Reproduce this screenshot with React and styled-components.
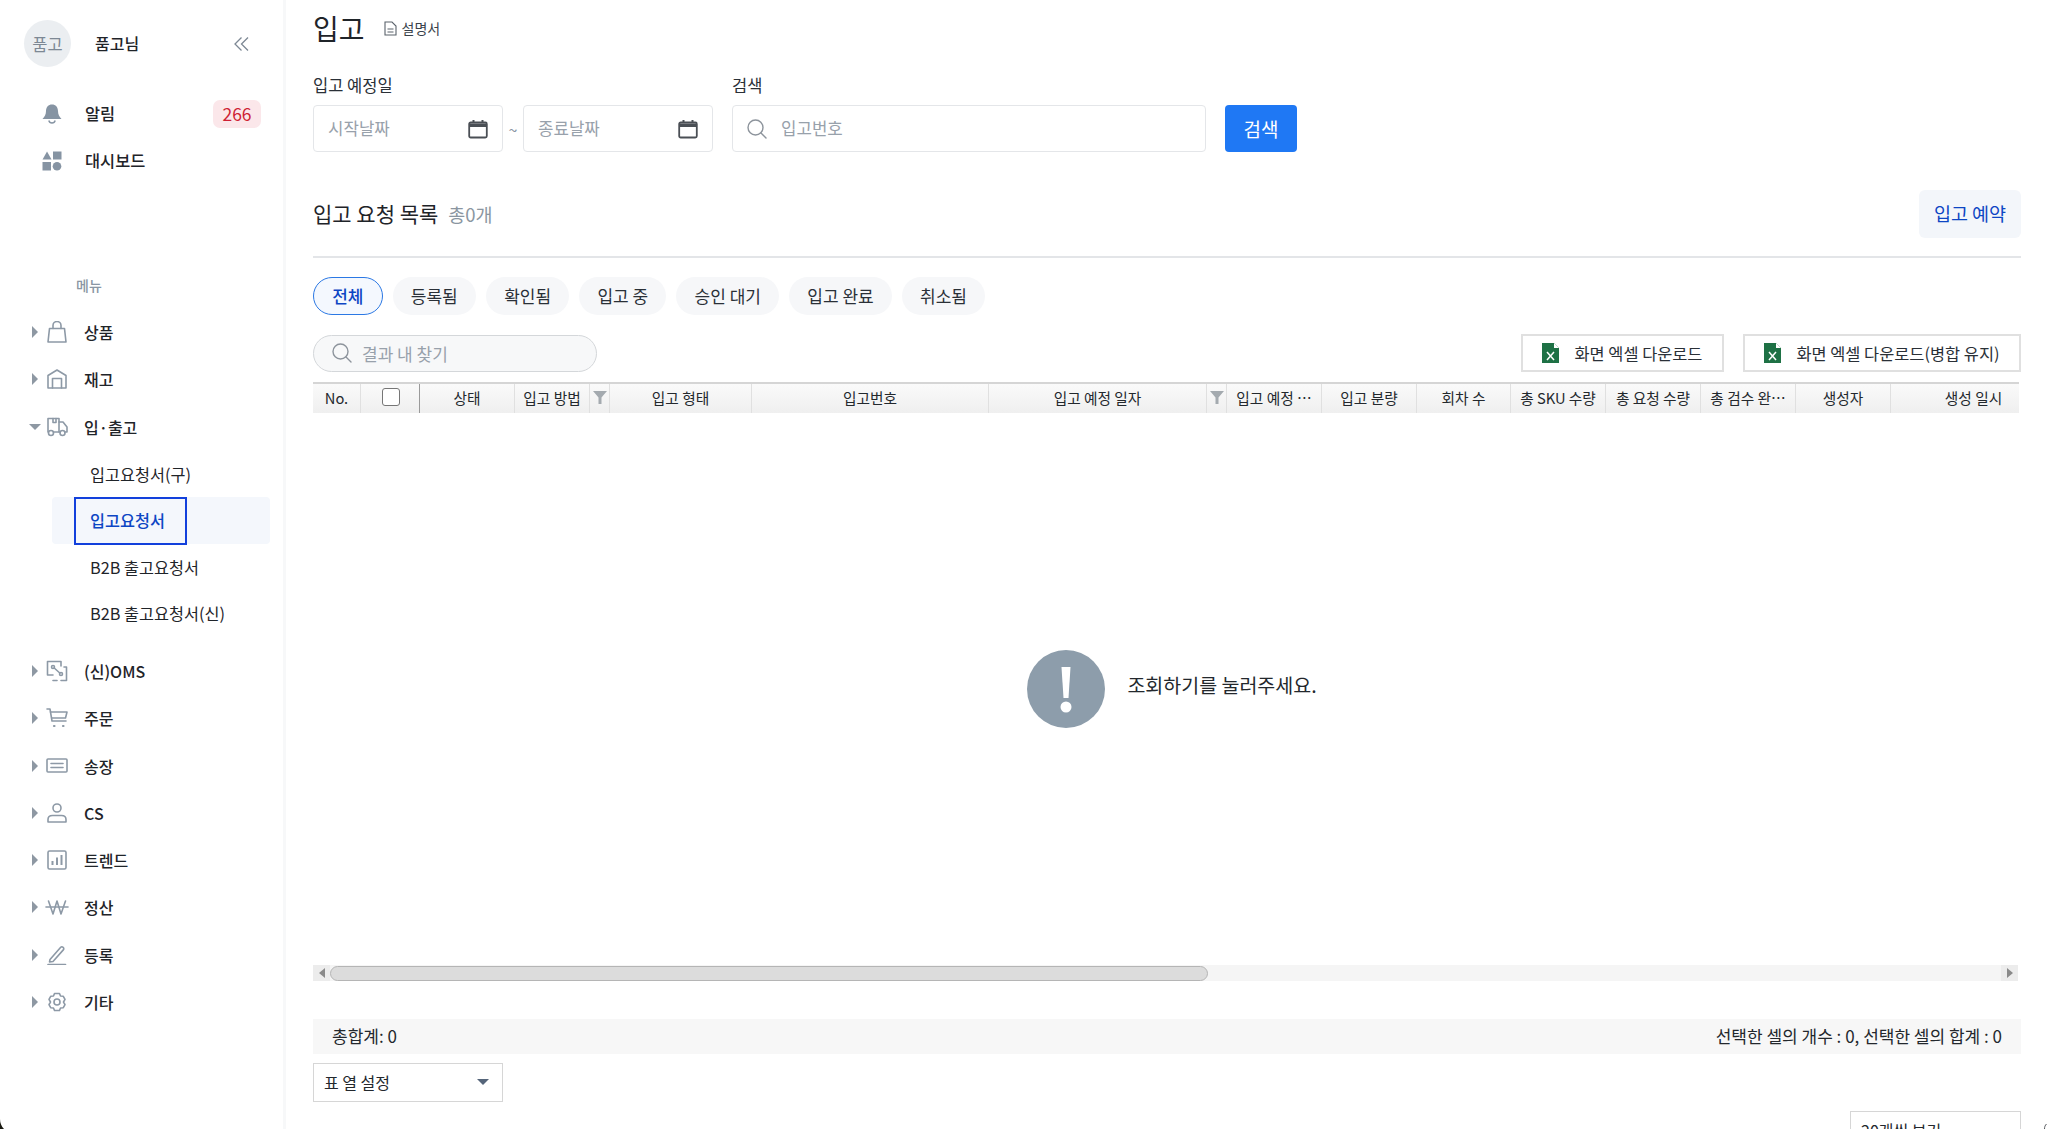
import React from "react";
import styled, { createGlobalStyle } from "styled-components";

const GlobalStyle = createGlobalStyle`
  html, body {
    margin: 0;
    padding: 0;
    height: 1129px;
    overflow: hidden;
    background: #fff;
  }
  * {
    box-sizing: border-box;
  }
  body {
    font-family: "Noto Sans CJK KR", "Noto Sans", sans-serif;
    color: #1f2429;
  }
`;

const Page = styled.div`
  position: relative;
  display: flex;
  width: 2048px;
  height: 1129px;
  overflow: hidden;
`;

const CornerLeft = styled.svg`
  position: absolute;
  left: 0;
  bottom: 0;
`;

const CornerRight = styled.svg`
  position: absolute;
  right: 1px;
  bottom: 0;
`;

//사이드바
const Sidebar = styled.aside`
  flex: none;
  width: 286px;
  height: 100%;
  padding: 20px 12px 0 0;
  border-right: 3px solid #f7f8f9;
`;

const Profile = styled.div`
  display: flex;
  align-items: center;
  height: 47px;
  padding-left: 24px;
`;

const Avatar = styled.div`
  display: flex;
  align-items: center;
  justify-content: center;
  width: 47px;
  height: 47px;
  border-radius: 50%;
  background: #ebeef1;
  color: #7d8894;
  font-size: 16.5px;
`;

const ProfileName = styled.div`
  margin-left: 24px;
  padding-bottom: 2px;
  font-size: 16px;
  font-weight: 500;
`;

const Collapse = styled.div`
  display: flex;
  margin-left: auto;
  margin-right: 22px;
`;

const TopRow = styled.div`
  display: flex;
  align-items: center;
  height: 47px;
  padding-left: 42px;
  font-size: 16.4px;
  font-weight: 500;
`;

const TopLabel = styled.span`
  margin-left: 23px;
  padding-bottom: 2px;
`;

const Badge = styled.span`
  margin-left: auto;
  margin-right: 10px;
  width: 48px;
  height: 28px;
  line-height: 28px;
  border-radius: 7px;
  background: #fbe7ea;
  color: #cf1f35;
  font-size: 17.5px;
  font-weight: 400;
  text-align: center;
`;

const TopNav = styled.nav`
  margin-top: 23px;
`;

const MenuTitle = styled.div`
  margin: 91px 0 0 76px;
  height: 20px;
  line-height: 20px;
  color: #8a96a3;
  font-size: 14px;
  font-weight: 500;
`;

const MenuList = styled.div`
  margin-top: 13.5px;
`;

const MenuRow = styled.div`
  display: flex;
  align-items: center;
  height: 47.3px;
  padding-left: 32px;
  font-size: 16px;
  font-weight: 500;
`;

const Caret = styled.span`
  flex: none;
  width: 0;
  height: 0;
  ${(p) =>
    p.$open
      ? `
    margin-left: -3px;
    border-left: 6px solid transparent;
    border-right: 6px solid transparent;
    border-top: 6px solid #8e98a3;
    margin-right: -3px;
  `
      : `
    border-top: 6px solid transparent;
    border-bottom: 6px solid transparent;
    border-left: 6px solid #8e98a3;
  `}
`;

const MenuIcon = styled.span`
  display: flex;
  flex: none;
  width: 26px;
  margin-left: 5.5px;
  justify-content: center;
`;

const MenuLabel = styled.span`
  margin-left: 14.5px;
`;

const SubList = styled.div`
  margin-bottom: 10.5px;
`;

const SubRow = styled.div`
  position: relative;
  display: flex;
  align-items: center;
  height: 46.6px;
  margin-left: 52px;
  margin-right: 1px;
  padding-left: 38px;
  border-radius: 4px;
  font-size: 16.3px;
  background: ${(p) => (p.$active ? "#f4f7fc" : "transparent")};
  color: ${(p) => (p.$active ? "#0d46c4" : "#1f2429")};
  font-weight: ${(p) => (p.$active ? 500 : 400)};
`;

const FocusRing = styled.span`
  position: absolute;
  left: 22px;
  top: 0;
  width: 113px;
  height: 48px;
  border: 2px solid #1240dc;
`;

//본문
const Main = styled.main`
  flex: 1;
  min-width: 0;
  padding: 0 27px 0 27px;
`;

const TitleRow = styled.div`
  display: flex;
  align-items: center;
  height: 56px;
`;

const Title = styled.h1`
  margin: 0;
  font-size: 28px;
  font-weight: 400;
  line-height: 56px;
`;

const DocLink = styled.span`
  display: flex;
  align-items: center;
  gap: 5px;
  margin-left: 19px;
  font-size: 14px;
  color: #39414a;
`;

const FilterRow = styled.div`
  display: flex;
  align-items: flex-end;
  gap: 19px;
  margin-top: 16px;
`;

const Field = styled.div`
  display: flex;
  flex-direction: column;
  gap: 7px;
`;

const FieldLabel = styled.label`
  font-size: 16.5px;
  line-height: 26px;
  color: #2a3037;
`;

const DateRange = styled.div`
  display: flex;
  align-items: center;
`;

const Tilde = styled.span`
  width: 20px;
  text-align: center;
  color: #8a96a3;
  font-size: 16px;
`;

const InputBox = styled.div`
  display: flex;
  align-items: center;
  width: ${(p) => p.$width}px;
  height: 47px;
  padding: 0 14px;
  border: 1.5px solid #e4e6e9;
  border-radius: 4px;
  background: #fff;
`;

const Placeholder = styled.span`
  flex: 1;
  padding-bottom: 2px;
  font-size: 16.8px;
  color: #98a1ab;
`;

const SearchIcon = styled.span`
  display: flex;
  margin-right: ${(p) => p.$gap}px;
`;

const SearchButton = styled.button`
  width: 72px;
  height: 47px;
  border: 0;
  border-radius: 4px;
  background: #1f78f4;
  color: #fff;
  font-family: inherit;
  font-size: 19px;
`;

const SectionHead = styled.div`
  display: flex;
  align-items: center;
  justify-content: space-between;
  height: 67px;
  margin-top: 39px;
  border-bottom: 2px solid #e3e5e8;
  padding-bottom: 19px;
`;

const SectionTitle = styled.div`
  display: flex;
  align-items: baseline;
  gap: 10px;
  padding-bottom: 2px;
  font-size: 21px;
  font-weight: 400;
`;

const SectionCount = styled.span`
  font-size: 18.5px;
  color: #8b96a1;
`;

const ReserveButton = styled.button`
  width: 102px;
  height: 48px;
  padding: 0 0 2px;
  border: 0;
  border-radius: 6px;
  background: #f3f6fa;
  color: #0d46c4;
  font-family: inherit;
  font-size: 18.5px;
`;

const Chips = styled.div`
  display: flex;
  gap: 10px;
  margin-top: 19px;
`;

const Chip = styled.div`
  display: flex;
  align-items: center;
  justify-content: center;
  height: 38px;
  padding: 0 18.2px 2px;
  border-radius: 19px;
  font-size: 17px;
  background: ${(p) => (p.$active ? "#f4f8fe" : "#f6f7f9")};
  border: ${(p) => (p.$active ? "1.5px solid #2b78e4" : "0")};
  color: ${(p) => (p.$active ? "#0d46c4" : "#2a3037")};
  font-weight: ${(p) => (p.$active ? 500 : 400)};
`;

const ToolRow = styled.div`
  display: flex;
  align-items: center;
  justify-content: space-between;
  margin-top: 19px;
`;

const ResultSearch = styled.div`
  display: flex;
  align-items: center;
  width: 284px;
  height: 37px;
  padding: 0 0 0 18px;
  border: 1.5px solid #d4d7da;
  border-radius: 19px;
  background: #f7f8f9;
  font-size: 17px;
  color: #98a1ab;
`;

const ExcelGroup = styled.div`
  display: flex;
  gap: 19px;
`;

const ExcelButton = styled.div`
  display: flex;
  align-items: center;
  gap: 15px;
  height: 38px;
  padding: 0 19.5px;
  border: 2px solid #e0e0e0;
  background: #fff;
  font-size: 16.4px;
  color: #2a3037;
`;

const TableHead = styled.div`
  display: flex;
  width: 1706px;
  height: 31px;
  margin-top: 10px;
  overflow: hidden;
  border-top: 2px solid #d5d5d5;
  background: linear-gradient(#fafafa, #efefef);
`;

const HeadCell = styled.div`
  display: flex;
  align-items: center;
  justify-content: center;
  flex: none;
  width: ${(p) => p.$w}px;
  padding-bottom: 3px;
  border-right: 1px solid ${(p) => (p.$dark ? "#9a9a9a" : "#e0e0e0")};
  font-size: 14.7px;
  color: #23282d;
  white-space: nowrap;
`;

const CheckBox = styled.span`
  width: 18px;
  height: 18px;
  margin-left: 2px;
  border: 1.5px solid #767676;
  border-radius: 3px;
  background: #fff;
`;

const EmptyArea = styled.div`
  display: flex;
  align-items: center;
  justify-content: center;
  gap: 22px;
  height: 552px;
  padding-left: 10px;
`;

const EmptyBadge = styled.span`
  display: flex;
  width: 78px;
  height: 78px;
`;

const EmptyText = styled.span`
  font-size: 19.5px;
  color: #23282d;
  margin-top: -10px;
`;

const ScrollBar = styled.div`
  display: flex;
  align-items: center;
  width: 1705px;
  height: 16px;
  background: #f5f5f5;
`;

const ScrollArrow = styled.span`
  display: flex;
  align-items: center;
  justify-content: center;
  flex: none;
  width: 17px;
  height: 16px;
  background: #ececec;
  margin-left: ${(p) => (p.$end ? "auto" : 0)};
  &::before {
    content: "";
    border-top: 5px solid transparent;
    border-bottom: 5px solid transparent;
    ${(p) =>
      p.$end
        ? "border-left: 6px solid #8a8a8a;"
        : "border-right: 6px solid #8a8a8a;"}
  }
`;

const ScrollThumb = styled.span`
  width: 878px;
  height: 15px;
  border: 1px solid #b5b5b5;
  border-radius: 8px;
  background: #dcdcdc;
`;

const SumBar = styled.div`
  display: flex;
  align-items: center;
  justify-content: space-between;
  height: 35px;
  margin-top: 38px;
  padding: 0 19px 2px;
  background: #f7f7f7;
  font-size: 17px;
  color: #23282d;
`;

const BottomRow = styled.div`
  display: flex;
  align-items: flex-start;
  justify-content: space-between;
  margin-top: 9px;
`;

const SelectBox = styled.div`
  display: flex;
  align-items: center;
  justify-content: space-between;
  width: ${(p) => p.$width}px;
  height: 39px;
  padding: 0 13px 2px 10px;
  margin-top: ${(p) => p.$top || 0}px;
  border: 1.5px solid #d6d6d6;
  background: #fff;
  font-size: 16px;
  color: #23282d;
`;

const SelectCaret = styled.span`
  width: 0;
  height: 0;
  border-left: 6px solid transparent;
  border-right: 6px solid transparent;
  border-top: 6px solid #55657a;
`;

const iconProps = {
  fill: "none",
  stroke: "#8d99a6",
  strokeWidth: 1.6,
  strokeLinecap: "round",
  strokeLinejoin: "round",
};

const BagIcon = () => (
  <svg width="20" height="22" viewBox="0 0 20 22" {...iconProps}>
    <path d="M2.500 7.500h15L19 21H1z" />
    <path d="M6 7.500V4.500a4 4 0 0 1 8 0v3" />
  </svg>
);

const StockIcon = () => (
  <svg width="20" height="20" viewBox="0 0 20 20" {...iconProps}>
    <path d="M1 19V6.500L10 1l9 5.500V19z" />
    <path d="M5.500 19V9.500h9V19" />
  </svg>
);

const TruckIcon = () => (
  <svg width="22" height="20" viewBox="0 0 22 20" {...iconProps}>
    <path d="M2 15V1.500h11V15" />
    <path d="M13 5h4l4 5v5h-2" />
    <path d="M7 1.500v4h3v-4" />
    <circle cx="5" cy="16" r="2.500" />
    <circle cx="16.500" cy="16" r="2.500" />
    <path d="M7.500 15h6.500" />
  </svg>
);

const OmsIcon = () => (
  <svg width="22" height="22" viewBox="0 0 22 22" {...iconProps}>
    <path d="M7 15H1.500V1.500H15V6" />
    <path d="M15 20.500h5.500V7H18" />
    <path d="M7 20.500h4" />
    <circle cx="7" cy="7" r="1.500" />
    <circle cx="15" cy="14" r="1.500" />
    <path d="M8.200 8l5.600 5" />
  </svg>
);

const CartIcon = () => (
  <svg width="22" height="20" viewBox="0 0 22 20" {...iconProps}>
    <path d="M1 1h3l2 12h14" />
    <path d="M4.500 4H21l-1.500 6H6" />
    <path d="M8 18h.5M17 18h.5" strokeWidth="2.200" />
  </svg>
);

const InvoiceIcon = () => (
  <svg width="22" height="15" viewBox="0 0 22 15" {...iconProps}>
    <rect x="1" y="1" width="20" height="13" rx="1" />
    <path d="M5 5.500h12M5 9.500h12" />
  </svg>
);

const UserIcon = () => (
  <svg width="20" height="20" viewBox="0 0 20 20" {...iconProps}>
    <circle cx="10" cy="5" r="4" />
    <path d="M1 19v-2.500C1 14 3 12.500 5.500 12.500h9c2.500 0 4.500 1.500 4.500 4V19z" />
  </svg>
);

const TrendIcon = () => (
  <svg width="20" height="20" viewBox="0 0 20 20" {...iconProps}>
    <rect x="1" y="1" width="18" height="18" rx="1.500" />
    <path d="M5.500 15v-4M10 15V7.500M14.500 15V5" strokeWidth="2" strokeLinecap="butt" />
  </svg>
);

const WonIcon = () => (
  <svg width="24" height="15" viewBox="0 0 24 15" {...iconProps}>
    <path d="M3.500 1L8 14l4-13 4 13 4.500-13" />
    <path d="M1 7h22" />
  </svg>
);

const EditIcon = () => (
  <svg width="20" height="20" viewBox="0 0 20 20" {...iconProps}>
    <path d="M3 14.500L13.500 2.500c.7-.8 1.800-.9 2.600-.2s.9 1.800.2 2.600L6 16.500l-3.500.5z" />
    <path d="M1 19.500h17.500" />
  </svg>
);

const GearIcon = () => (
  <svg width="20" height="20" viewBox="0 0 20 20" {...iconProps}>
    <path d="M7.500 1.500h5l1 2.500 2.800.3 1.700 3-1.500 2.700 1.500 2.700-1.700 3-2.800.3-1 2.500h-5l-1-2.500-2.800-.3-1.700-3L3.500 10 2 7.300l1.700-3 2.800-.3z" />
    <circle cx="10" cy="10" r="3" />
  </svg>
);

const CalendarIcon = () => (
  <svg width="20" height="20" viewBox="0 0 20 20" fill="none">
    <rect x="1.200" y="3.500" width="17.600" height="15" rx="1.500" stroke="#4a4f55" strokeWidth="1.800" />
    <path d="M1.200 4.500h17.600v3.500H1.200z" fill="#4a4f55" />
    <path d="M5.500 1v3M14.500 1v3" stroke="#4a4f55" strokeWidth="2" />
  </svg>
);

const MagnifierIcon = () => (
  <svg width="20" height="20" viewBox="0 0 20 20" fill="none" stroke="#8d949c" strokeWidth="1.400">
    <circle cx="8.500" cy="8.500" r="7.500" />
    <path d="M14 14l5 5" strokeLinecap="round" />
  </svg>
);

const ExcelIcon = () => (
  <svg width="17" height="20" viewBox="0 0 17 20">
    <path d="M0 0h12l5 5v15H0z" fill="#1e7145" />
    <path d="M12 0l5 5h-5z" fill="#fff" />
    <path d="M5 9l7 8M12 9l-7 8" stroke="#fff" strokeWidth="1.500" />
  </svg>
);

const FilterIcon = () => (
  <svg width="14" height="13" viewBox="0 0 14 13">
    <path d="M0 0h14L8.500 6.500V13h-3V6.500z" fill="#a4aaaf" />
  </svg>
);

const menuTop = [
  { label: "상품", icon: <BagIcon /> },
  { label: "재고", icon: <StockIcon /> },
];

const menuBottom = [
  { label: "(신)OMS", icon: <OmsIcon /> },
  { label: "주문", icon: <CartIcon /> },
  { label: "송장", icon: <InvoiceIcon /> },
  { label: "CS", icon: <UserIcon /> },
  { label: "트렌드", icon: <TrendIcon /> },
  { label: "정산", icon: <WonIcon /> },
  { label: "등록", icon: <EditIcon /> },
  { label: "기타", icon: <GearIcon /> },
];

const chips = ["등록됨", "확인됨", "입고 중", "승인 대기", "입고 완료", "취소됨"];

const columns = [
  { label: "No.", w: 48 },
  { label: <CheckBox />, w: 59, dark: true },
  { label: "상태", w: 95 },
  { label: "입고 방법", w: 75 },
  { label: <FilterIcon />, w: 20 },
  { label: "입고 형태", w: 142 },
  { label: "입고번호", w: 237 },
  { label: "입고 예정 일자", w: 218 },
  { label: <FilterIcon />, w: 20 },
  { label: "입고 예정 …", w: 95 },
  { label: "입고 분량", w: 95 },
  { label: "회차 수", w: 94 },
  { label: "총 SKU 수량", w: 95 },
  { label: "총 요청 수량", w: 95 },
  { label: "총 검수 완…", w: 95 },
  { label: "생성자", w: 95 },
  { label: "생성 일시", w: 166 },
];

const App = () => {
  return (
    <>
      <GlobalStyle />
      <Page>
        <Sidebar>
          <Profile>
            <Avatar>품고</Avatar>
            <ProfileName>품고님</ProfileName>
            <Collapse>
              <svg width="15" height="14" viewBox="0 0 15 14" fill="none" stroke="#7d8894" strokeWidth="1.300">
                <path d="M7.500 0.500L1 7l6.500 6.500M14 0.500L7.500 7l6.500 6.500" />
              </svg>
            </Collapse>
          </Profile>
          <TopNav>
            <TopRow>
              <svg width="20" height="20" viewBox="0 0 20 20">
                <path d="M10 0.500c3.600 0 6 2.700 6 6.500 0 4 1.400 5.500 3.500 8H.5C2.600 12.500 4 11 4 7c0-3.800 2.400-6.500 6-6.500z" fill="#8694a3" />
                <path d="M6.800 16.500a3.300 3.300 0 0 0 6.400 0" fill="none" stroke="#8694a3" strokeWidth="1.400" />
              </svg>
              <TopLabel>알림</TopLabel>
              <Badge>266</Badge>
            </TopRow>
            <TopRow>
              <svg width="20" height="20" viewBox="0 0 20 20" fill="#8694a3">
                <path d="M5 .5l4.500 8h-9z" />
                <rect x="11" y="0.500" width="8.500" height="8" />
                <rect x="0.500" y="11" width="8.500" height="8.500" />
                <circle cx="15" cy="15.300" r="4.300" />
              </svg>
              <TopLabel>대시보드</TopLabel>
            </TopRow>
          </TopNav>
          <MenuTitle>메뉴</MenuTitle>
          <MenuList>
            {menuTop.map((item) => (
              <MenuRow key={item.label}>
                <Caret />
                <MenuIcon>{item.icon}</MenuIcon>
                <MenuLabel>{item.label}</MenuLabel>
              </MenuRow>
            ))}
            <MenuRow>
              <Caret $open />
              <MenuIcon>
                <TruckIcon />
              </MenuIcon>
              <MenuLabel>입·출고</MenuLabel>
            </MenuRow>
            <SubList>
              <SubRow>입고요청서(구)</SubRow>
              <SubRow $active>
                <FocusRing />
                입고요청서
              </SubRow>
              <SubRow>B2B 출고요청서</SubRow>
              <SubRow>B2B 출고요청서(신)</SubRow>
            </SubList>
            {menuBottom.map((item) => (
              <MenuRow key={item.label}>
                <Caret />
                <MenuIcon>{item.icon}</MenuIcon>
                <MenuLabel>{item.label}</MenuLabel>
              </MenuRow>
            ))}
          </MenuList>
        </Sidebar>
        <Main>
          <TitleRow>
            <Title>입고</Title>
            <DocLink>
              <svg width="13" height="15" viewBox="0 0 13 15" fill="none" stroke="#5a626b" strokeWidth="1.100">
                <path d="M1 1h7l4 4v9H1z" />
                <path d="M3.500 8h6M3.500 11h6" />
              </svg>
              설명서
            </DocLink>
          </TitleRow>
          <FilterRow>
            <Field>
              <FieldLabel>입고 예정일</FieldLabel>
              <DateRange>
                <InputBox $width={190}>
                  <Placeholder>시작날짜</Placeholder>
                  <CalendarIcon />
                </InputBox>
                <Tilde>~</Tilde>
                <InputBox $width={190}>
                  <Placeholder>종료날짜</Placeholder>
                  <CalendarIcon />
                </InputBox>
              </DateRange>
            </Field>
            <Field>
              <FieldLabel>검색</FieldLabel>
              <InputBox $width={474}>
                <SearchIcon $gap={14}>
                  <MagnifierIcon />
                </SearchIcon>
                <Placeholder>입고번호</Placeholder>
              </InputBox>
            </Field>
            <SearchButton>검색</SearchButton>
          </FilterRow>
          <SectionHead>
            <SectionTitle>
              입고 요청 목록
              <SectionCount>총0개</SectionCount>
            </SectionTitle>
            <ReserveButton>입고 예약</ReserveButton>
          </SectionHead>
          <Chips>
            <Chip $active>전체</Chip>
            {chips.map((chip) => (
              <Chip key={chip}>{chip}</Chip>
            ))}
          </Chips>
          <ToolRow>
            <ResultSearch>
              <SearchIcon $gap={10}>
                <MagnifierIcon />
              </SearchIcon>
              결과 내 찾기
            </ResultSearch>
            <ExcelGroup>
              <ExcelButton>
                <ExcelIcon />
                화면 엑셀 다운로드
              </ExcelButton>
              <ExcelButton>
                <ExcelIcon />
                화면 엑셀 다운로드(병합 유지)
              </ExcelButton>
            </ExcelGroup>
          </ToolRow>
          <TableHead>
            {columns.map((col, i) => (
              <HeadCell key={i} $w={col.w} $dark={col.dark}>
                {col.label}
              </HeadCell>
            ))}
          </TableHead>
          <EmptyArea>
            <EmptyBadge>
              <svg width="78" height="78" viewBox="0 0 78 78">
                <circle cx="39" cy="39" r="39" fill="#8d9dab" />
                <path d="M34.500 17h9l-2 31h-5z" fill="#fff" />
                <circle cx="39" cy="57" r="5.500" fill="#fff" />
              </svg>
            </EmptyBadge>
            <EmptyText>조회하기를 눌러주세요.</EmptyText>
          </EmptyArea>
          <ScrollBar>
            <ScrollArrow />
            <ScrollThumb />
            <ScrollArrow $end />
          </ScrollBar>
          <SumBar>
            <span>총합계: 0</span>
            <span>선택한 셀의 개수 : 0, 선택한 셀의 합계 : 0</span>
          </SumBar>
          <BottomRow>
            <SelectBox $width={190}>
              표 열 설정
              <SelectCaret />
            </SelectBox>
            <SelectBox $width={171} $top={48}>
              20개씩 보기
            </SelectBox>
          </BottomRow>
        </Main>
        <CornerLeft width="4" height="10" viewBox="0 0 4 10">
          <path d="M0 0c0 4 1.500 7.500 4 10H0z" fill="#1a1a12" />
        </CornerLeft>
        <CornerRight width="3" height="5" viewBox="0 0 3 5">
          <path d="M2.500 0C1 1.500.5 3 .5 5" fill="none" stroke="#55585c" />
        </CornerRight>
      </Page>
    </>
  );
};

export default App;
